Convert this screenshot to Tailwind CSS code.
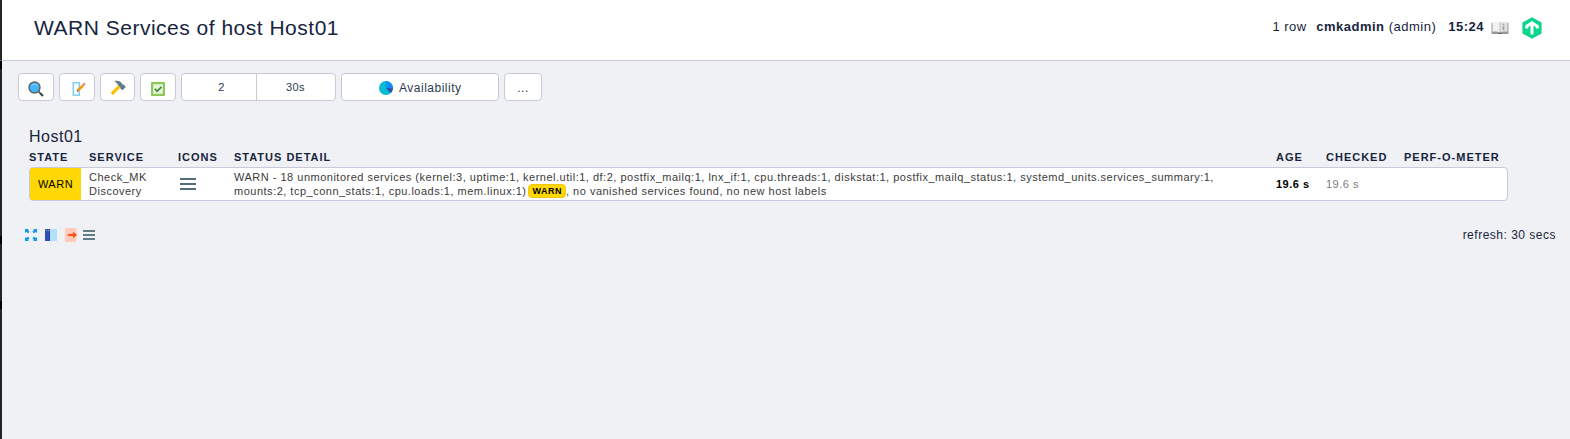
<!DOCTYPE html>
<html lang="en">
<head>
<meta charset="utf-8">
<title>WARN Services of host Host01</title>
<script src="https://cdn.jsdelivr.net/npm/@tailwindcss/browser@4"></script>
</head>
<body class="flex h-[439px] w-[1570px] overflow-hidden bg-[#f0f1f4] font-['Liberation_Sans',Arial,sans-serif] tracking-[0.5px] text-[#172440]">
<aside class="flex w-[2px] shrink-0 flex-col bg-[#1e2628]">
  <div class="mt-[60px] h-px bg-[#555b70]"></div>
  <div class="h-2 bg-black"></div>
  <div class="mt-[167px] h-2 bg-black"></div>
  <div class="mt-[57px] h-2 bg-black"></div>
</aside>
<div class="flex min-w-0 grow flex-col">
  <header class="flex h-[61px] shrink-0 items-center border-b border-[#c8cadb] bg-white pl-8 pr-7">
    <h1 class="mt-[-4px] grow text-[21px] leading-6">WARN Services of host Host01</h1>
    <div class="mt-[-7px] flex items-center text-[13px] leading-4">
      <span class="mr-[9.500px]">1 row</span>
      <span><b>cmkadmin</b> (admin)</span>
      <b class="ml-3">15:24</b>
      <svg class="ml-[7px] mt-[3px]" width="18" height="14" viewBox="0 0 18 14"><path d="M0.5 2h17v11h-17z" fill="#979797"/><path d="M1.500.8C5 .5 7.500.6 9 1.500v9.800C7 10.400 4.500 10.300 1.500 10.800z" fill="#f1f1f1"/><path d="M16.500.8C13 .5 10.500.6 9 1.500v9.800c2-.9 4.500-1 7.500-.5z" fill="#e4e4e4"/><path d="M9 1.500v9.800" stroke="#bbb"/><path d="M12.500 2.800v1.500m0 1v4" stroke="#a0a0a0" stroke-width="1.700"/><path d="M7 12.500h4" stroke="#666"/></svg>
      <svg class="ml-[13px] mt-[2px]" width="20" height="22" viewBox="0 0 20 22"><path d="M10 .3 19.600 5.600v10.800L10 21.700.4 16.400V5.600z" fill="#0ad68a"/><path d="M10 17.500V7M4.700 11.500V9.300L10 5.800l5.300 3.500v2.200" fill="none" stroke="#fff" stroke-width="3"/></svg>
    </div>
  </header>

  <nav class="mt-3 flex h-7 gap-[5px] pl-4 text-[#2c3b52]">
    <button class="flex w-9 items-center justify-center rounded-[4px] border border-[#c8cadb] bg-white">
      <svg class="mt-[3px]" width="16" height="16" viewBox="0 0 16 16"><path d="m10.500 10.500 1.500 1.500" stroke="#616161" stroke-width="1.800"/><path d="m12 12 3 3" stroke="#37474f" stroke-width="2.200"/><circle cx="6.500" cy="6.500" r="5.500" fill="#42b4f7" stroke="#616161" stroke-width="1.400"/><path d="M3.800 4.800c1.500-2 4.300-2 5.800 0" fill="none" stroke="#9adafc"/></svg>
    </button>
    <button class="flex w-9 items-center justify-center rounded-[4px] border border-[#c8cadb] bg-white">
      <svg class="ml-[4px] mt-[3px]" width="16" height="16" viewBox="0 0 16 16"><path d="M2.300 1.800h6v12.400h-6z" fill="#fff" stroke="#81d0fb" stroke-width="1.600"/><path d="m7 9.300 5-5" stroke="#ff9800" stroke-width="2.600"/><path d="m11.900 4.400 2-2" stroke="#e58b86" stroke-width="2.600"/><path d="m6 10.400 1.200-1.200" stroke="#795548" stroke-width="1.500"/></svg>
    </button>
    <button class="flex w-[35px] items-center justify-center rounded-[4px] border border-[#c8cadb] bg-white">
      <svg class="mt-[2px]" width="16" height="16" viewBox="0 0 16 16"><path d="m1.800 14 7.800-7.800" stroke="#ffc107" stroke-width="3.200"/><path d="M4.300 1.200C7.500.2 9.800 1 11.500 3l1.300 1.800 1-.3L15.800 7 12.500 10.300 10.300 8.400v-1.200L8 5C7.500 3.300 6.200 2.300 4.300 1.200z" fill="#607d8b"/></svg>
    </button>
    <button class="flex w-9 items-center justify-center rounded-[4px] border border-[#c8cadb] bg-white">
      <svg class="mt-[3px]" width="14" height="14" viewBox="0 0 14 14"><rect width="14" height="14" rx="1" fill="#8bc85a"/><path d="M2.200 2.200h9.600v9.600H2.200z" fill="#e8f4de"/><path d="m3.800 6.800 2.400 2.500L10.400 4.800" fill="none" stroke="#43883d" stroke-width="1.800"/></svg>
    </button>
    <div class="flex w-[155px] rounded-[4px] border border-[#c8cadb] bg-white text-[11px]">
      <button class="w-[75px] border-r border-[#c8cadb] pl-[5px]">2</button>
      <button class="grow pr-px">30s</button>
    </div>
    <button class="flex w-[158px] items-center justify-center rounded-[4px] border border-[#c8cadb] bg-white text-xs">
      <svg class="mr-[6.500px] mt-[2px]" width="14" height="14" viewBox="0 0 14 14"><circle cx="7" cy="7" r="7" fill="#00bcd4"/><path d="M7 7V0a7 7 0 0 1 6.800 8.500z" fill="#1689fc"/><path d="m7 7 6.900.5A7 7 0 0 1 11.500 12z" fill="#3949ab"/></svg>
      <span class="mt-px">Availability</span>
    </button>
    <button class="w-[38px] rounded-[4px] border border-[#c8cadb] bg-white pt-[2px] text-xs">...</button>
  </nav>

  <main class="pl-[27px] pr-[62px]">
    <h2 class="mt-[27px] text-base leading-[18px]">Host01</h2>
    <div class="mt-[5px] grid h-[16px] grid-cols-[60px_89px_56px_1042px_50px_78px_auto] text-[11px] font-bold leading-[13px] tracking-[1px]">
      <span>STATE</span><span>SERVICE</span><span>ICONS</span><span>STATUS DETAIL</span><span>AGE</span><span>CHECKED</span><span>PERF-O-METER</span>
    </div>
    <div class="grid h-[34px] w-[1479px] grid-cols-[50px_98px_56px_1042px_50px_auto] items-center overflow-hidden rounded-[4px] border border-[#c8cadb] bg-white text-[11px] leading-[14px] text-[#3b3b3b]">
      <span class="-m-px flex h-[34px] items-center justify-center rounded-l-[4px] border border-r-0 border-[#f3c60b] bg-[#ffd703] text-black">WARN</span>
      <span class="pl-[9px]">Check_MK<br>Discovery</span>
      <span class="pl-[2px]"><svg width="16" height="14" viewBox="0 0 16 14"><path d="M0 2h16M0 7h16M0 12h16" stroke="#546e7a" stroke-width="2"/></svg></span>
      <p class="whitespace-nowrap">WARN - 18 unmonitored services (kernel:3, uptime:1, kernel.util:1, df:2, postfix_mailq:1, lnx_if:1, cpu.threads:1, diskstat:1, postfix_mailq_status:1, systemd_units.services_summary:1,<br>mounts:2, tcp_conn_stats:1, cpu.loads:1, mem.linux:1)<b class="ml-[2px] inline-block h-[14px] w-[37.500px] rounded-[4px] border border-[#f3c60b] bg-[#ffd703] text-center align-top text-[9px] leading-[13px] text-black">WARN</b>, no vanished services found, no new host labels</p>
      <b class="text-black">19.6 s</b>
      <span class="text-[#7b7b7b]">19.6 s</span>
    </div>
  </main>

  <footer class="mt-[26px] flex h-4 items-center pl-[23px] pr-[14px] text-xs">
    <svg width="12" height="12" viewBox="0 0 12 12"><path d="M0 0h4L2.900 1.100 4.600 2.800 3.200 4.200 1.100 2.900 0 4zM12 0v4l-1.100-1.100-2.100 1.300-1.400-1.400 1.700-1.700L8 0zM0 12V8l1.100 1.100 2.100-1.300 1.400 1.400-1.700 1.700L4 12zM12 12H8l1.100-1.100-1.700-1.700 1.400-1.400 2.100 1.300L12 8z" fill="#1297ef"/></svg>
    <svg class="ml-2" width="12" height="12" viewBox="0 0 12 12"><path d="M0 0h5v12H0z" fill="#3150b5"/><path d="M5 0h7v12H5z" fill="#b0e0fc"/><path d="M1 1h1v1H1zM3 1h1v1H3z" fill="#c5b95d"/><path d="M4 3h1v9H4z" fill="#263f9d"/></svg>
    <svg class="ml-2" width="13" height="14" viewBox="0 0 13 14"><rect width="11.500" height="14" rx="1" fill="#ffccbc"/><path d="M2.800 6H8V3.800l4.300 3.200L8 10.200V8H2.800z" fill="#ff5218"/></svg>
    <svg class="ml-[5px]" width="12" height="10" viewBox="0 0 12 10"><path d="M0 1h12M0 5h12M0 9h12" stroke="#607d87" stroke-width="2"/></svg>
    <span class="ml-auto">refresh: 30 secs</span>
  </footer>
</div>
</body>
</html>
